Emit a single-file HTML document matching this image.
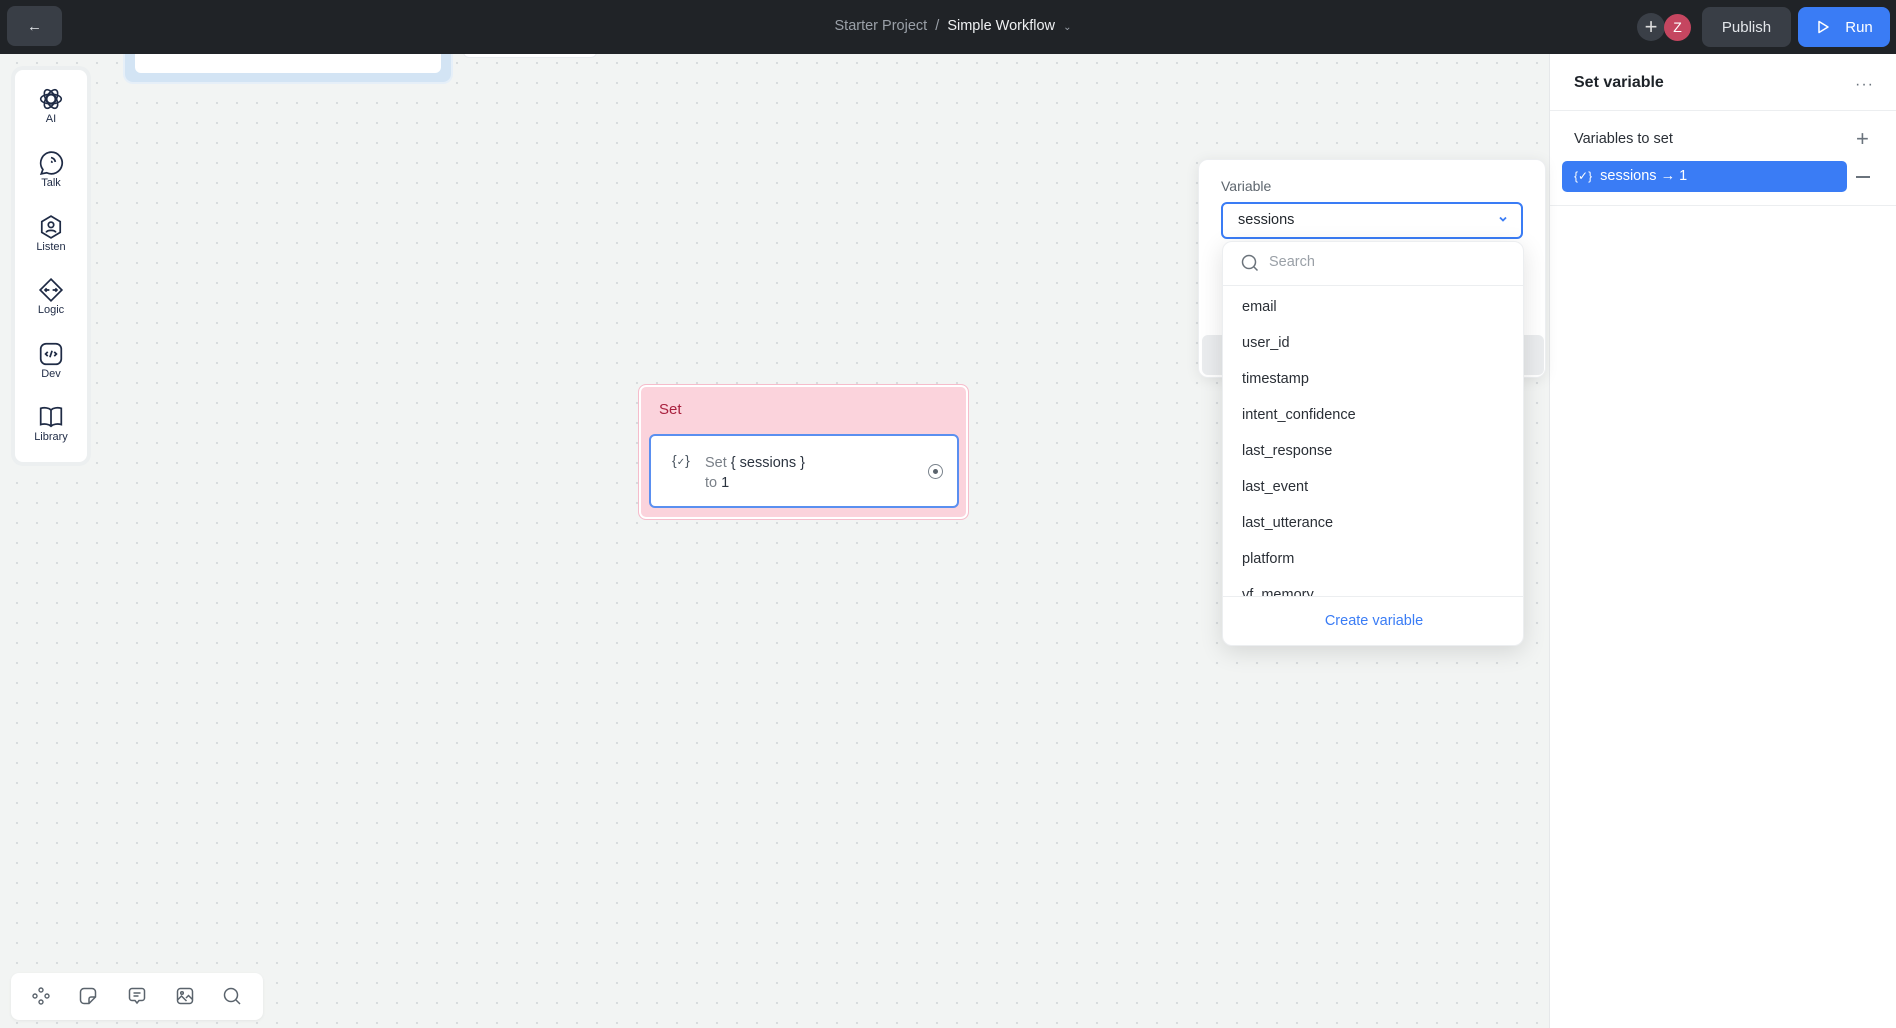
<!DOCTYPE html>
<html><head><meta charset="utf-8"><style>
*{box-sizing:border-box;margin:0;padding:0}
body{width:1896px;height:1028px;overflow:hidden;position:relative;font-family:"Liberation Sans",sans-serif;background:#f2f4f3;
background-image:radial-gradient(circle,#d6dadc 1px,transparent 1.3px);background-size:20px 20px;background-position:7px -7px}
.abs{position:absolute}
.top{left:0;top:0;width:1896px;height:54px;background:#202327}
.btn{border-radius:8px;display:flex;align-items:center;justify-content:center;color:#e3e6ea;font-size:15px}
.side{left:15px;top:70px;width:72px;height:392px;background:#fff;border-radius:8px;box-shadow:0 0 0 4px #eceff0}
.si{position:absolute;left:0;width:72px;text-align:center;font-size:11px;color:#1f2b45}
.si svg{display:block;margin:0 auto 1px}
.panel{left:1549px;top:54px;width:347px;height:974px;background:#fff;border-left:1px solid #e6e8ea}
.dd{left:1222px;top:241px;width:302px;height:405px;background:#fff;border-radius:10px;box-shadow:0 6px 24px rgba(0,0,0,.12);border:1px solid #eceef0;overflow:hidden}
.it{position:absolute;left:19px;font-size:14.5px;color:#2a2f36}
</style></head><body>

<!-- top partial node -->
<div class="abs" style="left:123px;top:40px;width:330px;height:44px;background:#d3e4f4;border-radius:0 0 10px 10px;border:2px solid #e6eff8;border-top:none"></div>
<div class="abs" style="left:135px;top:40px;width:306px;height:33px;background:#fff;border-radius:0 0 6px 6px"></div>
<div class="abs" style="left:463px;top:40px;width:134px;height:18px;background:#fff;border-radius:0 0 6px 6px;border:1px solid #e8ebee"></div>
<div class="abs top"></div>
<div class="abs btn" style="left:7px;top:6px;width:55px;height:40px;background:#393e46;font-size:15px">&#8592;</div>
<div class="abs" style="left:0;width:1896px;top:18px;text-align:center;font-size:14.5px;color:#9aa0a8;padding-left:10px">Starter Project &nbsp;/&nbsp; <span style="color:#eef0f2">Simple Workflow</span> &nbsp;<span style="font-size:10px">&#8964;</span></div>
<div class="abs" style="left:1637px;top:13px;width:28px;height:28px;border-radius:50%;background:#3a3f47;color:#ddd;text-align:center;line-height:27px;font-size:22px">+</div>
<div class="abs" style="left:1664px;top:14px;width:27px;height:27px;border-radius:50%;background:#c54660;color:#fff;text-align:center;line-height:27px;font-size:14px">Z</div>
<div class="abs btn" style="left:1702px;top:7px;width:89px;height:40px;background:#393e46">Publish</div>
<div class="abs btn" style="left:1798px;top:7px;width:92px;height:40px;background:#3a7cf5;color:#fff"><svg width="16" height="16" viewBox="0 0 16 16" style="margin-right:14px"><path d="M4 2.5v11l9-5.5z" fill="none" stroke="#fff" stroke-width="1.5" stroke-linejoin="round"/></svg>Run</div>

<!-- sidebar -->
<div class="abs side">
<div class="si" style="top:16px"><svg width="26" height="26" viewBox="0 0 24 24" fill="none" stroke="#1f2b45" stroke-width="1.5"><circle cx="12" cy="12" r="4"/><ellipse cx="12" cy="12" rx="9.5" ry="4.5"/><ellipse cx="12" cy="12" rx="9.5" ry="4.5" transform="rotate(60 12 12)"/><ellipse cx="12" cy="12" rx="9.5" ry="4.5" transform="rotate(120 12 12)"/></svg>AI</div>
<div class="si" style="top:80px"><svg width="26" height="26" viewBox="0 0 24 24" fill="none" stroke="#1f2b45" stroke-width="1.6"><path d="M12 2a10 10 0 1 1-4 19l-5 1 1.5-4A10 10 0 0 1 12 2z"/><path d="M12 7a5 5 0 0 1 4 4M12 10.5a1.5 1.5 0 0 1 1 1.3"/></svg>Talk</div>
<div class="si" style="top:144px"><svg width="26" height="26" viewBox="0 0 24 24" fill="none" stroke="#1f2b45" stroke-width="1.6"><path d="M12 2l8.5 5v10L12 22l-8.5-5V7z"/><circle cx="12" cy="10" r="2.5"/><path d="M7.5 17c1-2.5 8-2.5 9 0"/></svg>Listen</div>
<div class="si" style="top:207px"><svg width="26" height="26" viewBox="0 0 24 24" fill="none" stroke="#1f2b45" stroke-width="1.6"><path d="M12 2l10 10-10 10L2 12z"/><path d="M6.5 12h4M8 10.5L6.5 12 8 13.5M13.5 12h4M16 10.5l1.5 1.5-1.5 1.5"/></svg>Logic</div>
<div class="si" style="top:271px"><svg width="26" height="26" viewBox="0 0 24 24" fill="none" stroke="#1f2b45" stroke-width="1.6"><rect x="2.5" y="2.5" width="19" height="19" rx="5"/><path d="M9 10l-2 2 2 2M15 10l2 2-2 2M13 9l-2 6"/></svg>Dev</div>
<div class="si" style="top:334px"><svg width="26" height="26" viewBox="0 0 24 24" fill="none" stroke="#1f2b45" stroke-width="1.6"><path d="M12 5.5C10 3.5 6 3 2.5 4v15c3.5-1 7.5-.5 9.5 1.5 2-2 6-2.5 9.5-1.5V4C18 3 14 3.5 12 5.5zM12 5.5v15"/></svg>Library</div>
</div>

<!-- Set node -->
<div class="abs" style="left:638px;top:384px;width:331px;height:136px;background:#fbd3dc;border-radius:8px;border:1px solid #f6bccb;box-shadow:inset 0 0 0 2px #fff"></div>
<div class="abs" style="left:659px;top:401px;font-size:15px;color:#a8203e">Set</div>
<div class="abs" style="left:649px;top:434px;width:310px;height:74px;background:#fff;border:2px solid #5a8ff0;border-radius:6px"></div>
<div class="abs" style="left:672px;top:452px;font-size:14px;color:#4a5560">{<span style="font-size:10px">&#10003;</span>}</div>
<div class="abs" style="left:705px;top:453px;font-size:14.5px;color:#7a8088;line-height:20px">Set <span style="color:#2c3440">{ sessions }</span><br>to <span style="color:#2c3440">1</span></div>
<div class="abs" style="left:928px;top:464px;width:15px;height:15px;border-radius:50%;border:1.5px solid #7a838c"><div style="width:5px;height:5px;border-radius:50%;background:#5a636c;margin:3.5px"></div></div>

<!-- bottom toolbar -->
<div class="abs" style="left:11px;top:973px;width:252px;height:47px;background:#fff;border-radius:8px;box-shadow:0 1px 3px rgba(0,0,0,.06)"></div>
<svg class="abs" style="left:31px;top:986px" width="20" height="20" viewBox="0 0 20 20" fill="none" stroke="#5a636c" stroke-width="1.4"><circle cx="10" cy="4" r="2"/><circle cx="10" cy="16" r="2"/><circle cx="4" cy="10" r="2"/><circle cx="16" cy="10" r="2"/></svg>
<svg class="abs" style="left:78px;top:986px" width="20" height="20" viewBox="0 0 20 20" fill="none" stroke="#5a636c" stroke-width="1.5"><path d="M6 2.5h8a3.5 3.5 0 0 1 3.5 3.5v5l-6.5 6.5H6A3.5 3.5 0 0 1 2.5 14V6A3.5 3.5 0 0 1 6 2.5zM11 17.5V13a2 2 0 0 1 2-2h4.5"/></svg>
<svg class="abs" style="left:127px;top:986px" width="20" height="20" viewBox="0 0 20 20" fill="none" stroke="#5a636c" stroke-width="1.5"><path d="M5 2.5h10A2.5 2.5 0 0 1 17.5 5v7a2.5 2.5 0 0 1-2.5 2.5h-3L10 17l-2-2.5H5A2.5 2.5 0 0 1 2.5 12V5A2.5 2.5 0 0 1 5 2.5zM6.5 7h7M6.5 10h5"/></svg>
<svg class="abs" style="left:175px;top:986px" width="20" height="20" viewBox="0 0 20 20" fill="none" stroke="#5a636c" stroke-width="1.5"><rect x="2.5" y="2.5" width="15" height="15" rx="3"/><circle cx="7" cy="7" r="1.3"/><path d="M2.5 14l4-4 5 5M11 12l2.5-2.5 4 4"/></svg>
<svg class="abs" style="left:222px;top:986px" width="20" height="20" viewBox="0 0 20 20" fill="none" stroke="#5a636c" stroke-width="1.5"><circle cx="9" cy="9" r="6.5"/><path d="M14 14l4 4"/></svg>

<!-- right panel -->
<div class="abs panel">
<div class="abs" style="left:24px;top:20px;font-size:16px;font-weight:bold;color:#1e2329">Set variable</div>
<div class="abs" style="left:305px;top:22px;font-size:16px;color:#6a737c;letter-spacing:1px">&middot;&middot;&middot;</div>
<div class="abs" style="left:0;top:56px;width:347px;height:1px;background:#eceef0"></div>
<div class="abs" style="left:24px;top:77px;font-size:14.5px;color:#2a2f36">Variables to set</div>
<div class="abs" style="left:306px;top:72px;font-size:22px;color:#6a737c;font-weight:300">+</div>
<div class="abs" style="left:12px;top:107px;width:285px;height:31px;background:#3a7cf5;border-radius:5px;color:#fff;font-size:14.5px;line-height:31px;padding-left:12px"><span style="font-size:12px">{&#10003;}</span> &nbsp;sessions &rarr; 1</div>
<div class="abs" style="left:306px;top:122px;width:14px;height:2px;background:#6a737c"></div>
<div class="abs" style="left:0;top:151px;width:347px;height:1px;background:#eceef0"></div>
</div>

<!-- popover -->
<div class="abs" style="left:1198px;top:159px;width:348px;height:219px;background:#fff;border-radius:10px;box-shadow:0 2px 14px rgba(0,0,0,.08);border:1px solid #eceef0"></div>
<div class="abs" style="left:1221px;top:178px;font-size:14px;color:#5e666e">Variable</div>
<div class="abs" style="left:1221px;top:202px;width:302px;height:37px;border:2px solid #3a7cf5;border-radius:6px;background:#fff"></div>
<div class="abs" style="left:1238px;top:212px;font-size:14.5px;color:#23282e">sessions</div>
<svg class="abs" style="left:1498px;top:214px" width="10" height="10" viewBox="0 0 10 10"><path d="M2 3.5l3 3 3-3" fill="none" stroke="#3a7cf5" stroke-width="1.8"/></svg>
<div class="abs" style="left:1202px;top:335px;width:342px;height:40px;background:#eaecee;border-radius:6px"></div>
<div class="abs dd">
<svg class="abs" style="left:17px;top:11px" width="20" height="20" viewBox="0 0 20 20" fill="none" stroke="#6b737b" stroke-width="1.5"><circle cx="9" cy="9" r="6.5"/><path d="M14 14l3.5 3.5"/></svg>
<div class="abs" style="left:46px;top:12px;font-size:14.5px;color:#9aa0a7">Search</div>
<div class="abs" style="left:0;top:43px;width:302px;height:1px;background:#eceef0"></div>
<div class="it" style="top:57px">email</div>
<div class="it" style="top:93px">user_id</div>
<div class="it" style="top:129px">timestamp</div>
<div class="it" style="top:165px">intent_confidence</div>
<div class="it" style="top:201px">last_response</div>
<div class="it" style="top:237px">last_event</div>
<div class="it" style="top:273px">last_utterance</div>
<div class="it" style="top:309px">platform</div>
<div style="position:absolute;left:0;top:340px;width:302px;height:14px;overflow:hidden"><div class="it" style="top:5px">vf_memory</div></div>
<div class="abs" style="left:0;top:354px;width:302px;height:1px;background:#eceef0"></div>
<div class="abs" style="left:0;width:302px;top:371px;text-align:center;font-size:14.5px;color:#3a7cf5">Create variable</div>
</div>
</body></html>
